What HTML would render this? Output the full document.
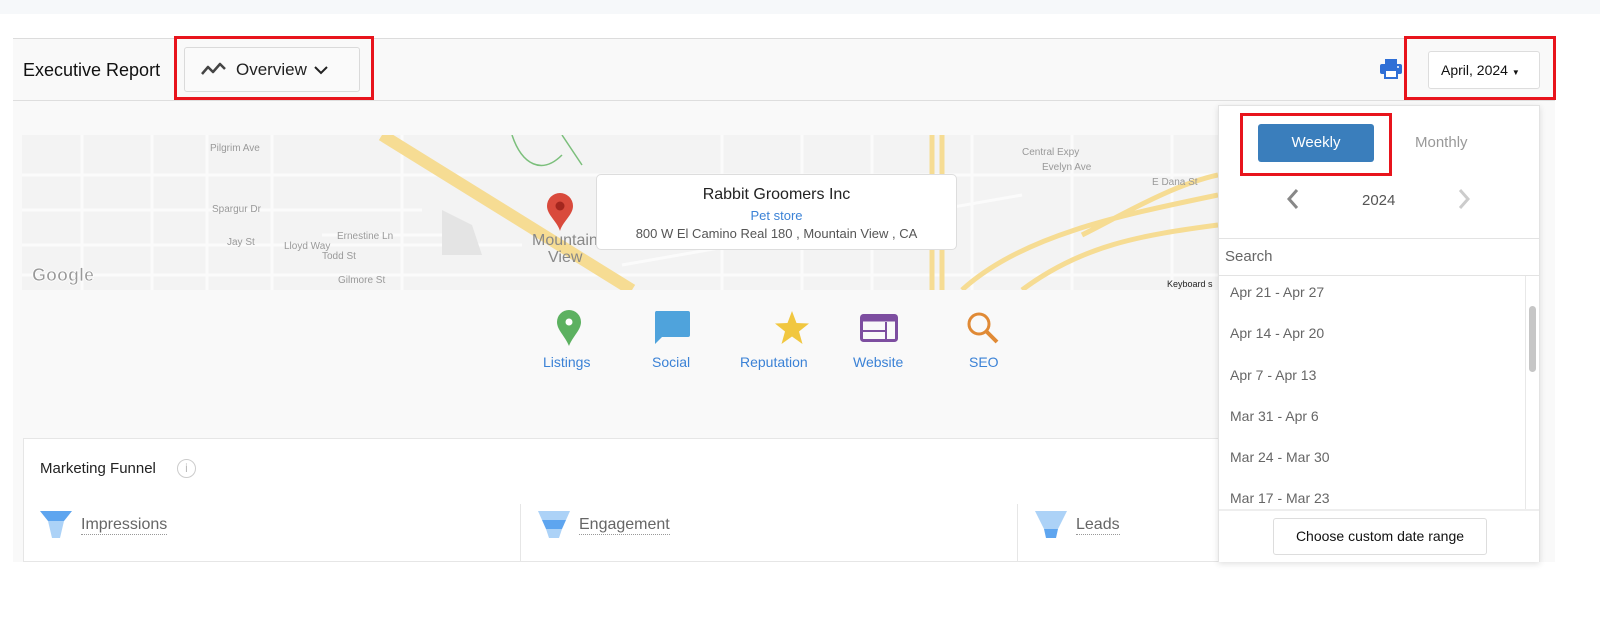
<!DOCTYPE html>
<html><head><meta charset="utf-8"><style>
*{box-sizing:border-box;margin:0;padding:0}
body{width:1600px;height:633px;background:#fff;font-family:"Liberation Sans",sans-serif;position:relative;overflow:hidden;color:#222}
.abs{position:absolute}
.red{position:absolute;border:3px solid #e8141c}
</style></head><body>
<div class="abs" style="left:0;top:0;width:1600px;height:14px;background:#f6f8fa"></div>
<div class="abs" style="left:13px;top:38px;width:1542px;height:524px;background:#f9f9f9;border-top:1px solid #dcdcdc"></div>
<div class="abs" style="left:13px;top:100px;width:1542px;height:1px;background:#dedede"></div>
<div class="abs" style="left:23px;top:60px;font-size:18px;color:#111">Executive Report</div>
<div class="abs" style="left:184px;top:47px;width:176px;height:45px;border:1px solid #dadada;border-radius:3px;background:#fafafa"></div>
<svg class="abs" style="left:200px;top:60px" width="28" height="20" viewBox="0 0 28 20"><path d="M2 14 L8 7 L13 12 L20 4 L25 9" fill="none" stroke="#444" stroke-width="2.5" stroke-linejoin="round"/></svg>
<div class="abs" style="left:236px;top:60px;font-size:17px;color:#222">Overview</div>
<svg class="abs" style="left:313px;top:64px" width="16" height="12"><path d="M2 3 L8 9 L14 3" fill="none" stroke="#222" stroke-width="2"/></svg>
<div class="red" style="left:174px;top:36px;width:200px;height:64px"></div>

<svg class="abs" style="left:1380px;top:59px" width="22" height="20" viewBox="0 0 22 20"><rect x="5" y="0" width="12" height="5" fill="#2f6fd6"/><rect x="0" y="5" width="22" height="10" rx="2" fill="#2f6fd6"/><rect x="5" y="11" width="12" height="8" fill="#fff" stroke="#2f6fd6" stroke-width="2"/><circle cx="18" cy="8" r="1" fill="#fff"/></svg>
<div class="abs" style="left:1428px;top:51px;width:112px;height:38px;border:1px solid #ddd;border-radius:3px;background:#fff;font-size:14px;line-height:36px;padding-left:12px;color:#111">April, 2024 <span style="font-size:8px">▼</span></div>
<div class="red" style="left:1404px;top:36px;width:152px;height:64px"></div>

<!-- map -->
<div class="abs" style="left:22px;top:135px;width:1196px;height:155px;background:#f3f3f3;overflow:hidden">
<svg width="1196" height="155">
<g stroke="#fbfbfb" stroke-width="3" fill="none">
<path d="M0 40 H1196 M0 75 H400 M0 110 H500 M0 140 H1196 M60 0 V155 M130 0 V155 M185 0 V155 M250 0 V155 M380 0 V155 M300 100 H420 M600 80 H900 M700 0 V155 M780 0 V155 M850 0 V155 M950 0 V155 M1050 0 V155 M1150 0 V155 M600 130 L1000 60"/>
</g>
<path d="M360 0 L610 155" stroke="#f6dc93" stroke-width="12"/>
<path d="M910 0 V155 M920 0 V155" stroke="#f6dc93" stroke-width="5"/>
<path d="M940 155 C1000 100 1100 80 1196 60 M1000 155 C1060 110 1120 100 1196 90 M1060 100 C1100 80 1150 50 1196 40" stroke="#f6dc93" stroke-width="5" fill="none"/>
<path d="M490 0 C500 30 520 40 540 20 M540 0 L560 30" stroke="#7bbf7b" stroke-width="1.5" fill="none"/>
<polygon points="420,75 450,90 460,120 420,120" fill="#e4e4e4"/>
<g font-size="10" fill="#999" font-family="Liberation Sans">
<text x="188" y="16">Pilgrim Ave</text><text x="190" y="77">Spargur Dr</text><text x="262" y="114">Lloyd Way</text><text x="205" y="110">Jay St</text><text x="315" y="104">Ernestine Ln</text><text x="300" y="124">Todd St</text><text x="316" y="148">Gilmore St</text>
<text x="1130" y="50">E Dana St</text><text x="1020" y="35">Evelyn Ave</text><text x="1000" y="20">Central Expy</text>
</g>
<text x="510" y="110" font-size="16" fill="#888">Mountain</text><text x="526" y="127" font-size="16" fill="#888">View</text>
<text x="10" y="146" font-size="18" font-weight="bold" fill="#999" stroke="#fff" stroke-width="0.8">Google</text>
<text x="1145" y="152" font-size="9" fill="#222">Keyboard s</text>
</svg>
</div>
<svg class="abs" style="left:545px;top:193px" width="30" height="40" viewBox="0 0 30 40"><path d="M15 38 C12 28 2 22 2 13 A13 13 0 0 1 28 13 C28 22 18 28 15 38Z" fill="#d94a3c"/><circle cx="15" cy="13" r="4.5" fill="#a3261e"/></svg>
<div class="abs" style="left:596px;top:174px;width:361px;height:76px;background:#fff;border:1px solid #ddd;border-radius:5px;text-align:center">
<div style="font-size:16px;margin-top:11px;color:#222">Rabbit Groomers Inc</div>
<div style="font-size:13px;color:#3b82d6;margin-top:4px">Pet store</div>
<div style="font-size:13px;color:#555;margin-top:3px">800 W El Camino Real 180 , Mountain View , CA</div>
</div>

<!-- icons -->
<svg class="abs" style="left:556px;top:310px" width="26" height="36" viewBox="0 0 26 36"><path d="M13 36 C9 26 1 20 1 12 A12 12 0 0 1 25 12 C25 20 17 26 13 36Z" fill="#5cb160"/><circle cx="13" cy="12" r="3.5" fill="#fff"/></svg>
<svg class="abs" style="left:654px;top:311px" width="36" height="34" viewBox="0 0 36 34"><path d="M2 0 H34 A2 2 0 0 1 36 2 V24 A2 2 0 0 1 34 26 H8 L1 33 V2 A2 2 0 0 1 2 0Z" fill="#4fa3dc"/></svg>
<svg class="abs" style="left:774px;top:311px" width="36" height="34" viewBox="0 0 36 34"><path d="M18 0 L22.5 12 L35 12.5 L25 20.5 L28.5 33 L18 25.5 L7.5 33 L11 20.5 L1 12.5 L13.5 12Z" fill="#f1c740"/></svg>
<svg class="abs" style="left:860px;top:314px" width="38" height="28" viewBox="0 0 38 28"><rect x="1.5" y="1.5" width="35" height="25" rx="2" fill="none" stroke="#7d4ea0" stroke-width="3"/><rect x="1.5" y="1.5" width="35" height="6" fill="#7d4ea0"/><path d="M3 17 H26 M26 8 V26" stroke="#7d4ea0" stroke-width="2"/></svg>
<svg class="abs" style="left:966px;top:311px" width="34" height="34" viewBox="0 0 34 34"><circle cx="13" cy="13" r="10" fill="none" stroke="#e08a36" stroke-width="3"/><path d="M20 20 L31 31" stroke="#e08a36" stroke-width="4"/></svg>
<div class="abs" style="top:354px;font-size:14px;color:#3b82d6;left:543px">Listings</div>
<div class="abs" style="top:354px;font-size:14px;color:#3b82d6;left:652px">Social</div>
<div class="abs" style="top:354px;font-size:14px;color:#3b82d6;left:740px">Reputation</div>
<div class="abs" style="top:354px;font-size:14px;color:#3b82d6;left:853px">Website</div>
<div class="abs" style="top:354px;font-size:14px;color:#3b82d6;left:969px">SEO</div>

<!-- funnel card -->
<div class="abs" style="left:23px;top:438px;width:1300px;height:124px;background:#fff;border:1px solid #e6e6e6"></div>
<div class="abs" style="left:40px;top:460px;font-size:15px;color:#222">Marketing Funnel</div>
<div class="abs" style="left:177px;top:459px;width:19px;height:19px;border:1.5px solid #ccc;border-radius:50%;font-size:12px;color:#bbb;text-align:center;line-height:16px">i</div>
<div class="abs" style="left:520px;top:504px;width:1px;height:58px;background:#e6e6e6"></div>
<div class="abs" style="left:1017px;top:504px;width:1px;height:58px;background:#e6e6e6"></div>
<svg class="abs" style="left:40px;top:511px" width="32" height="27" viewBox="0 0 32 27"><path d="M0 0 H32 L24 10 H8Z" fill="#5ea5ef"/><path d="M8 10 H24 L20 27 H12Z" fill="#acd2f7"/></svg>
<svg class="abs" style="left:538px;top:511px" width="32" height="27" viewBox="0 0 32 27"><path d="M0 0 H32 L28 9 H4Z" fill="#acd2f7"/><path d="M4 9 H28 L24 18 H8Z" fill="#5ea5ef"/><path d="M8 18 H24 L21 27 H11Z" fill="#acd2f7"/></svg>
<svg class="abs" style="left:1035px;top:511px" width="32" height="27" viewBox="0 0 32 27"><path d="M0 0 H32 L23 18 H9Z" fill="#acd2f7"/><path d="M9 18 H23 L21 27 H11Z" fill="#5ea5ef"/></svg>
<div class="abs" style="left:81px;top:516px;font-size:16px;color:#666;border-bottom:1px dotted #999">Impressions</div>
<div class="abs" style="left:579px;top:516px;font-size:16px;color:#666;border-bottom:1px dotted #999">Engagement</div>
<div class="abs" style="left:1076px;top:516px;font-size:16px;color:#666;border-bottom:1px dotted #999">Leads</div>

<!-- dropdown -->
<div class="abs" style="left:1218px;top:105px;width:322px;height:457px;background:#fff;border:1px solid #e3e3e3;box-shadow:0 2px 6px rgba(0,0,0,.12)">
<div class="abs" style="left:39px;top:18px;width:116px;height:38px;background:#3a7ebc;border-radius:3px;color:#fff;font-size:15px;text-align:center;line-height:38px">Weekly</div>
<div class="abs" style="left:196px;top:28px;font-size:15px;color:#999">Monthly</div>
<svg class="abs" style="left:66px;top:82px" width="16" height="22"><path d="M12 2 L4 11 L12 20" fill="none" stroke="#888" stroke-width="3"/></svg>
<div class="abs" style="left:143px;top:86px;font-size:15px;color:#555">2024</div>
<svg class="abs" style="left:237px;top:82px" width="16" height="22"><path d="M4 2 L12 11 L4 20" fill="none" stroke="#ccc" stroke-width="3"/></svg>
<div class="abs" style="left:0;top:132px;width:320px;height:1px;background:#e3e3e3"></div>
<div class="abs" style="left:6px;top:142px;font-size:15px;color:#666">Search</div>
<div class="abs" style="left:0;top:169px;width:320px;height:1px;background:#e3e3e3"></div>
<div class="abs" style="left:0;top:170px;width:306px;height:233px;overflow:hidden">
<div class="abs" style="left:11px;top:-4px;font-size:14px;color:#666;line-height:41.3px">Apr 21 - Apr 27<br>Apr 14 - Apr 20<br>Apr 7 - Apr 13<br>Mar 31 - Apr 6<br>Mar 24 - Mar 30<br>Mar 17 - Mar 23</div>
</div>
<div class="abs" style="left:306px;top:170px;width:1px;height:233px;background:#e8e8e8"></div>
<div class="abs" style="left:310px;top:200px;width:7px;height:66px;background:#c6c6c6;border-radius:4px"></div>
<div class="abs" style="left:0;top:403px;width:320px;height:53px;background:#fff;border-top:2px solid #eee"></div>
<div class="abs" style="left:54px;top:412px;width:214px;height:37px;border:1px solid #ddd;border-radius:3px;font-size:14px;text-align:center;line-height:35px;color:#111">Choose custom date range</div>
</div>
<div class="red" style="left:1240px;top:113px;width:152px;height:63px"></div>
</body></html>
